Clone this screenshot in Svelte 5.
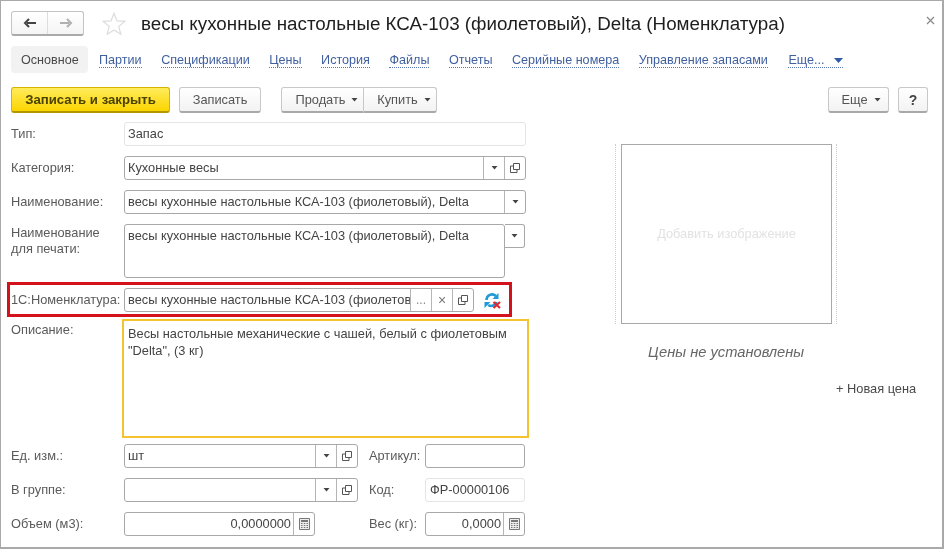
<script>
  const tabs = ['Партии','Спецификации','Цены','История','Файлы','Отчеты','Серийные номера','Управление запасами'];
</script>

{#snippet copy()}
  <svg class="ic" width="12" height="12" viewBox="0 0 12 12"><path d="M4.500 1.500h6v6h-6z M4.500 4h-3v6.500h6.500v-3" fill="none" stroke="#555" stroke-width="1"/></svg>
{/snippet}
{#snippet caret()}
  <svg class="ic" width="7" height="4" viewBox="0 0 7 4"><path d="M0.500 0h6L3.500 3.500z" fill="#444"/></svg>
{/snippet}
{#snippet calc()}
  <svg class="ic" width="11" height="12" viewBox="0 0 11 12"><path d="M.5.5h10v11H.5z" fill="#eee" stroke="#777"/><path d="M2 2h7v2H2z" fill="#777"/><path d="M2 5.500h1.500M4.800 5.500h1.500M7.500 5.500H9M2 7.500h1.500M4.800 7.500h1.500M7.500 7.500H9M2 9.500h1.500M4.800 9.500h1.500M7.500 9.500H9" stroke="#777"/></svg>
{/snippet}

<div class="win">
  <header class="head">
    <div class="nav">
      <button class="navb">
        <svg width="14" height="10" viewBox="0 0 14 10"><path d="M13 5H4M6 1 2 5l4 4" fill="none" stroke="#444" stroke-width="2"/></svg>
      </button>
      <button class="navb">
        <svg width="14" height="10" viewBox="0 0 14 10"><path d="M1 5h9M8 1l4 4-4 4" fill="none" stroke="#b0b0b0" stroke-width="2"/></svg>
      </button>
    </div>
    <svg class="star" width="24" height="23" viewBox="0 0 24 23"><path d="M12 1.200l3 7.600 8 .5-6.200 5.100 2 7.800L12 18l-6.800 4.200 2-7.800L1 9.300l8-.5z" fill="#fff" stroke="#dcdcdc" stroke-width="1.200"/></svg>
    <h1>весы кухонные настольные КСА-103 (фиолетовый), Delta (Номенклатура)</h1>
    <svg class="close" width="9" height="9" viewBox="0 0 9 9"><path d="M1 1l7 7M8 1L1 8" stroke="#888" stroke-width="1.200"/></svg>
  </header>

  <nav class="tabs">
    <span class="tab-active">Основное</span>
    {#each tabs as t}<span class="link">{t}</span>{/each}
    <span class="link more">Еще...<svg width="9" height="5" viewBox="0 0 9 5"><path d="M0 0h9L4.500 5z" fill="#2f5aa8"/></svg></span>
  </nav>

  <div class="cmd">
    <button class="btn primary">Записать и закрыть</button>
    <button class="btn save">Записать</button>
    <div class="group">
      <button class="btn sell">Продать {@render caret()}</button>
      <button class="btn buy">Купить {@render caret()}</button>
    </div>
    <span class="grow"></span>
    <button class="btn esche">Еще {@render caret()}</button>
    <button class="btn help">?</button>
  </div>

  <div class="body">
    <section class="form">
      <div class="row"><span class="lbl">Тип:</span><div class="f ro"><span class="val">Запас</span></div></div>
      <div class="row"><span class="lbl">Категория:</span><div class="f"><span class="val">Кухонные весы</span><i class="sb">{@render caret()}</i><i class="sb">{@render copy()}</i></div></div>
      <div class="row"><span class="lbl">Наименование:</span><div class="f"><span class="val">весы кухонные настольные КСА-103 (фиолетовый), Delta</span><i class="sb">{@render caret()}</i></div></div>
      <div class="row print">
        <span class="lbl two">Наименование<br>для печати:</span>
        <div class="ta">весы кухонные настольные КСА-103 (фиолетовый), Delta</div>
        <div class="tab-b">{@render caret()}</div>
      </div>
      <div class="row red">
        <span class="lbl">1С:Номенклатура:</span>
        <div class="f w350"><span class="val">весы кухонные настольные КСА-103 (фиолетовый), Delta</span><i class="sb">...</i><i class="sb x">×</i><i class="sb">{@render copy()}</i></div>
        <svg class="sync" width="17" height="17" viewBox="0 0 17 17">
          <path d="M2.500 8a5.500 5.500 0 0 1 9.300-4" fill="none" stroke="#1f9ad6" stroke-width="2.600"/>
          <path d="M14.500 1v6h-6z" fill="#1f9ad6"/>
          <path d="M12.500 10a5.500 5.500 0 0 1-8.300 3" fill="none" stroke="#1f9ad6" stroke-width="2.600"/>
          <path d="M.5 16v-6h6z" fill="#1f9ad6"/>
          <path d="M9.500 10l6.500 6M16 10l-6.500 6" stroke="#e0282e" stroke-width="2.200"/>
        </svg>
      </div>
      <div class="row desc">
        <span class="lbl">Описание:</span>
        <div class="note">Весы настольные механические с чашей, белый с фиолетовым "Delta", (3 кг)</div>
      </div>
      <div class="row">
        <div class="lhs"><span class="lbl">Ед. изм.:</span><div class="f"><span class="val">шт</span><i class="sb">{@render caret()}</i><i class="sb">{@render copy()}</i></div></div>
        <div class="rhs"><span class="lbl2">Артикул:</span><div class="f"></div></div>
      </div>
      <div class="row">
        <div class="lhs"><span class="lbl">В группе:</span><div class="f"><span class="val"></span><i class="sb">{@render caret()}</i><i class="sb">{@render copy()}</i></div></div>
        <div class="rhs"><span class="lbl2">Код:</span><div class="f ro"><span class="val code">ФР-00000106</span></div></div>
      </div>
      <div class="row">
        <div class="lhs"><span class="lbl">Объем (м3):</span><div class="f short"><span class="val num">0,0000000</span><i class="sb">{@render calc()}</i></div></div>
        <div class="rhs"><span class="lbl2">Вес (кг):</span><div class="f"><span class="val num">0,0000</span><i class="sb">{@render calc()}</i></div></div>
      </div>
    </section>

    <aside class="side">
      <div class="pic"><div class="box">Добавить изображение</div></div>
      <p class="noprice">Цены не установлены</p>
      <p class="newprice">+ Новая цена</p>
    </aside>
  </div>
</div>

<style>
  :global(body) { margin: 0; background: #fff; }
  .win {
    width: 944px; height: 549px; box-sizing: border-box; overflow: hidden;
    border: 1px solid #a9a9a9; border-right-width: 2px; border-bottom-width: 2px;
    padding: 10px 14px 0 10px; background: #fff;
    font: 12.8px/16px "Liberation Sans", Arial, sans-serif; color: #4a4a4a;
    filter: blur(0.4px);
  }
  button { font: inherit; color: inherit; margin: 0; }

  .head { display: flex; align-items: center; height: 25px; position: relative; }
  .nav { display: flex; width: 73px; height: 25px; box-sizing: border-box; border: 1px solid #c4c4c4; border-bottom: 2px solid #aaa; border-radius: 3px; background: linear-gradient(#fff,#f4f4f4); }
  .navb { flex: 1; border: 0; background: none; padding: 0; display: flex; align-items: center; justify-content: center; }
  .navb + .navb { border-left: 1px solid #ddd; }
  .star { margin-left: 18px; }
  h1 { margin: 1px 0 0 15px; font-size: 18.800px; line-height: 24px; font-weight: 400; color: #1e1e1e; white-space: nowrap; }
  .close { position: absolute; right: -7px; top: 5px; }

  .tabs { display: flex; align-items: center; gap: 19.500px; margin-top: 10px; height: 27px; font-size: 12.600px; }
  .tab-active { background: #f2f2f2; border-radius: 4px; padding: 0 9px 0 10px; height: 27px; line-height: 28px; width: 58px; white-space: nowrap; color: #4a4a4a; }
  .tab-active + .link { margin-left: -8.500px; }
  .link { color: #3f5f9f; border-bottom: 1px dotted #5a78b8; line-height: 14px; white-space: nowrap; margin-top: 2px; }
  .more { margin-left: 1px; display: flex; align-items: center; gap: 9px; }

  .cmd { display: flex; align-items: center; margin-top: 14px; height: 26px; }
  .btn { height: 26px; box-sizing: border-box; padding: 0; border: 1px solid #c8c8c8; border-bottom: 2px solid #a8a8a8; border-radius: 3px; background: linear-gradient(#fff,#f3f3f3); white-space: nowrap; display: flex; align-items: center; justify-content: center; gap: 6px; color: #555; }
  .primary { width: 159px; background: linear-gradient(#ffec5c,#fbd500); border-color: #d5b400; border-bottom-color: #b39700; font-weight: 700; color: #4b4200; font-size: 13.200px; }
  .save { width: 82px; margin-left: 9px; }
  .group { display: flex; margin-left: 20px; }
  .sell { width: 83px; padding-left: 9px; border-radius: 3px 0 0 3px; }
  .buy { width: 73px; padding-left: 8px; border-left: 0; border-radius: 0 3px 3px 0; }
  .grow { flex: 1; }
  .esche { width: 61px; padding-left: 5px; }
  .help { width: 30px; margin-left: 9px; font-weight: 700; font-size: 14px; color: #444; }

  .body { display: flex; margin-top: 9px; }
  .form { width: 515px; display: flex; flex-direction: column; gap: 10px; }
  .side { width: 395px; position: relative; }

  .row { display: flex; align-items: center; height: 24px; }
  .lbl { width: 113px; flex: none; color: #5a5a5a; white-space: nowrap; }
  .lbl2 { width: 56px; flex: none; color: #5a5a5a; white-space: nowrap; }
  .f { flex: 1; min-width: 0; height: 24px; box-sizing: border-box; display: flex; align-items: stretch; border: 1px solid #a8a8a8; border-radius: 3px; background: #fff; overflow: hidden; }
  .f.ro { border-color: #e4e4e4; }
  .val { flex: 1; min-width: 0; padding: 0 3px; line-height: 22px; color: #444; white-space: nowrap; overflow: hidden; }
  .code { padding-left: 4px; }
  .num { text-align: right; padding-right: 2px; }
  .sb { flex: none; width: 21px; box-sizing: border-box; border-left: 1px solid #b5b5b5; display: flex; align-items: center; justify-content: center; font-style: normal; color: #888; line-height: 22px; font-size: 12px; }
  .sb.x { font-size: 14px; color: #777; }
  .ic { display: block; }

  .print { height: 54px; align-items: flex-start; }
  .two { line-height: 16px; margin-top: 1px; }
  .ta { width: 381px; height: 54px; box-sizing: border-box; border: 1px solid #a8a8a8; border-radius: 3px; padding: 3px; color: #444; line-height: 16px; white-space: nowrap; }
  .tab-b { width: 20px; height: 24px; box-sizing: border-box; border: 1px solid #a8a8a8; border-left: 0; border-radius: 0 3px 3px 0; display: flex; align-items: center; justify-content: center; }

  .red { height: 24px; padding: 3px 4px 2px 1px; margin: -6px -8px 0 -4px; border: 3px solid #d3121c; width: 494px; flex: none; box-sizing: content-box; }
  .w350 { flex: none; width: 350px; }
  .w350 .val { padding-right: 0; }
  .sync { margin-left: 10px; }

  .desc { height: 119px; align-items: flex-start; margin-top: -8px; margin-bottom: -4px; }
  .desc .lbl { margin-top: 3px; width: 111px; }
  .note { width: 407px; height: 119px; box-sizing: border-box; flex: none; border: 2px solid #f4c430; padding: 4px; color: #444; line-height: 17px; }

  .lhs { display: flex; align-items: center; width: 347px; flex: none; }
  .rhs { display: flex; align-items: center; width: 156px; margin-left: 11px; flex: none; }
  .short { flex: none; width: 191px; }

  .pic { position: absolute; left: 89px; top: 22px; width: 222px; height: 180px; border-left: 1px dotted #ccc; border-right: 1px dotted #ccc; box-sizing: border-box; padding: 0 4px 0 5px; }
  .box { height: 180px; box-sizing: border-box; border: 1px solid #a8a8a8; display: flex; align-items: center; justify-content: center; color: #e2e2e2; }
  .noprice { position: absolute; left: 122px; top: 222px; margin: 0; font-size: 14.700px; font-style: italic; color: #666; white-space: nowrap; }
  .newprice { position: absolute; left: 310px; top: 259px; margin: 0; color: #4a4a4a; white-space: nowrap; }
</style>
